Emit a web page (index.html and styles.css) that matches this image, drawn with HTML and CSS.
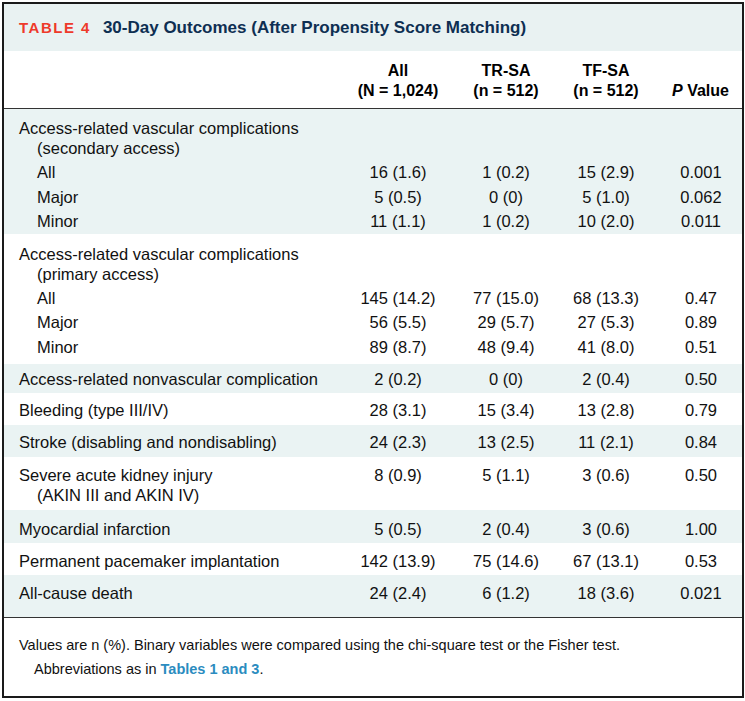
FILE: index.html
```html
<!DOCTYPE html>
<html>
<head>
<meta charset="utf-8">
<link rel="stylesheet" href="styles.css">
</head>
<body>
<div class="card">
  <div class="title"><span class="tag">TABLE 4</span><span class="name">30-Day Outcomes (After Propensity Score Matching)</span></div>
  <table class="data">
    <colgroup><col class="c-label"><col class="c-all"><col class="c-tr"><col class="c-tf"><col class="c-p"></colgroup>
    <thead>
      <tr><th></th><th>All<br>(N = 1,024)</th><th>TR-SA<br>(n = 512)</th><th>TF-SA<br>(n = 512)</th><th><i>P</i> Value</th></tr>
    </thead>
    <tbody class="shade group g1">
      <tr class="ghead"><td class="lbl">Access-related vascular complications<br>(secondary access)</td><td></td><td></td><td></td><td></td></tr>
      <tr class="sub"><td class="lbl ind">All</td><td>16 (1.6)</td><td>1 (0.2)</td><td>15 (2.9)</td><td>0.001</td></tr>
      <tr class="sub"><td class="lbl ind">Major</td><td>5 (0.5)</td><td>0 (0)</td><td>5 (1.0)</td><td>0.062</td></tr>
      <tr class="sub last"><td class="lbl ind">Minor</td><td>11 (1.1)</td><td>1 (0.2)</td><td>10 (2.0)</td><td>0.011</td></tr>
    </tbody>
    <tbody class="group g2">
      <tr class="ghead"><td class="lbl">Access-related vascular complications<br>(primary access)</td><td></td><td></td><td></td><td></td></tr>
      <tr class="sub"><td class="lbl ind">All</td><td>145 (14.2)</td><td>77 (15.0)</td><td>68 (13.3)</td><td>0.47</td></tr>
      <tr class="sub"><td class="lbl ind">Major</td><td>56 (5.5)</td><td>29 (5.7)</td><td>27 (5.3)</td><td>0.89</td></tr>
      <tr class="sub last"><td class="lbl ind">Minor</td><td>89 (8.7)</td><td>48 (9.4)</td><td>41 (8.0)</td><td>0.51</td></tr>
    </tbody>
    <tbody>
      <tr class="single shade r-nv"><td class="lbl">Access-related nonvascular complication</td><td>2 (0.2)</td><td>0 (0)</td><td>2 (0.4)</td><td>0.50</td></tr>
      <tr class="single"><td class="lbl">Bleeding (type III/IV)</td><td>28 (3.1)</td><td>15 (3.4)</td><td>13 (2.8)</td><td>0.79</td></tr>
      <tr class="single shade"><td class="lbl">Stroke (disabling and nondisabling)</td><td>24 (2.3)</td><td>13 (2.5)</td><td>11 (2.1)</td><td>0.84</td></tr>
      <tr class="single r-kid"><td class="lbl">Severe acute kidney injury<br>(AKIN III and AKIN IV)</td><td>8 (0.9)</td><td>5 (1.1)</td><td>3 (0.6)</td><td>0.50</td></tr>
      <tr class="single shade r-myo"><td class="lbl">Myocardial infarction</td><td>5 (0.5)</td><td>2 (0.4)</td><td>3 (0.6)</td><td>1.00</td></tr>
      <tr class="single r-pace"><td class="lbl">Permanent pacemaker implantation</td><td>142 (13.9)</td><td>75 (14.6)</td><td>67 (13.1)</td><td>0.53</td></tr>
      <tr class="single shade r-last"><td class="lbl">All-cause death</td><td>24 (2.4)</td><td>6 (1.2)</td><td>18 (3.6)</td><td>0.021</td></tr>
    </tbody>
  </table>
  <div class="foot">
    <p class="note">Values are n (%). Binary variables were compared using the chi-square test or the Fisher test.</p>
    <p class="note indent">Abbreviations as in <a class="ref">Tables 1 and 3</a>.</p>
  </div>
</div>
</body>
</html>
```

FILE: styles.css
```css
html, body {
  margin: 0;
  padding: 0;
  background: #ffffff;
}
body {
  padding: 2px 1px 3px 2px;
  font-family: "Liberation Sans", "DejaVu Sans", sans-serif;
  color: #111;
}
.card {
  border: 2px solid #1a1a1a;
  height: 696px;
  box-sizing: border-box;
  display: flex;
  flex-direction: column;
}
.title {
  background: #e9f2f2;
  height: 47px;
  display: flex;
  align-items: center;
  padding-left: 15px;
  font-weight: 700;
}
.tag {
  color: #ee3a2b;
  font-size: 15px;
  letter-spacing: 1.5px;
  margin-right: 12px;
}
.name {
  color: #0e2f52;
  font-size: 17px;
}
.data {
  width: 100%;
  border-collapse: collapse;
  table-layout: fixed;
  font-size: 16.5px;
}
.c-label { width: 336px; }
.c-all { width: 116px; }
.c-tr { width: 100px; }
.c-tf { width: 100px; }
.c-p { width: auto; }
thead th {
  font-weight: 700;
  font-size: 16px;
  line-height: 20px;
  padding: 10px 0 7px;
  text-align: center;
  vertical-align: bottom;
  border-bottom: 1px solid #333;
  color: #000;
}
thead th:last-child { padding-left: 3px; }
td {
  padding: 0;
  text-align: center;
  vertical-align: top;
  line-height: 20px;
}
td:last-child { padding-left: 4px; }
td.lbl {
  text-align: left;
  padding-left: 33px;
  text-indent: -18px;
}
td.lbl.ind {
  padding-left: 33px;
  text-indent: 0;
}
tbody.shade td, tr.shade td { background: #eaf3f3; }
.ghead td { padding-top: 9px; padding-bottom: 2px; }
.g2 .ghead td { padding-top: 9.5px; }
.sub td { line-height: 24.5px; }
.sub.last td { padding-bottom: 0.5px; }
.g2 .sub.last td { padding-bottom: 5px; }
.single td { padding-top: 7px; padding-bottom: 5px; }
.single.r-nv td { padding-top: 5px; padding-bottom: 4px; }
.single.r-kid td { padding-top: 8px; padding-bottom: 5px; }
.single.r-myo td { padding-top: 9px; padding-bottom: 4px; }
.single.r-pace td { padding-top: 8px; padding-bottom: 4px; }
.single.r-last td { padding-top: 8px; padding-bottom: 14px; border-bottom: 1px solid #333; }
.foot {
  padding: 15px 15px 0;
  font-size: 14.5px;
}
.note {
  margin: 0;
  line-height: 24px;
}
.note.indent { padding-left: 15px; }
.ref {
  color: #2b8cc0;
  font-weight: 700;
}
```
